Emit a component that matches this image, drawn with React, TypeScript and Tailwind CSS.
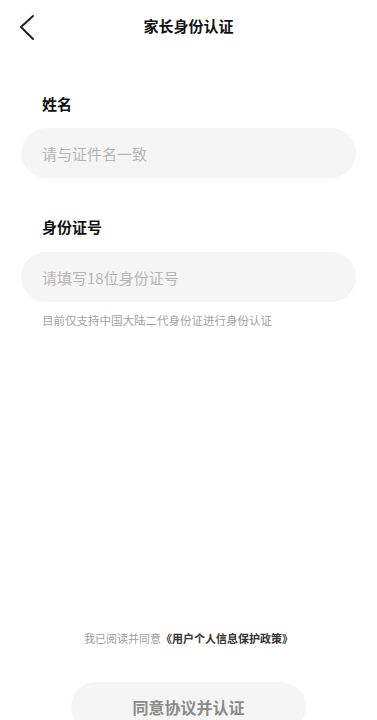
export default function App() {
  const font = { fontFamily: '"Noto Sans CJK SC", "Noto Sans", sans-serif' };

  return (
    <div className="min-h-screen w-full bg-white font-['Noto_Sans_CJK_SC',sans-serif]" style={font}>
      {/* header */}
      <div className="relative flex h-[52px] items-center justify-center">
        <button type="button" className="absolute left-[14px] top-[9px] p-1" aria-label="返回">
          <svg width="20" height="28" viewBox="0 0 20 28" fill="none">
            <path d="M15 3 L3 14 L15 26" stroke="#222" strokeWidth="2" strokeLinecap="round" strokeLinejoin="round" />
          </svg>
        </button>
        <h1 className="text-[15px] font-bold leading-[22px] text-[#111]">家长身份认证</h1>
      </div>

      {/* form */}
      <div className="px-[21px]">
        <label className="mt-[41px] block pl-[21px] text-[15px] font-bold leading-[22px] text-[#111]">姓名</label>
        <input
          type="text"
          placeholder="请与证件名一致"
          className="mt-[13px] h-[50px] w-full rounded-full bg-[#f5f5f5] px-[21px] text-[15px] text-[#222] outline-none placeholder:text-[#b5b5b5]"
        />

        <label className="mt-[38px] block pl-[21px] text-[15px] font-bold leading-[22px] text-[#111]">身份证号</label>
        <input
          type="text"
          placeholder="请填写18位身份证号"
          className="mt-[14px] h-[50px] w-full rounded-full bg-[#f5f5f5] px-[21px] text-[15px] text-[#222] outline-none placeholder:text-[#b5b5b5]"
        />
        <p className="mt-[10px] pl-[21px] text-[11.5px] leading-[16px] text-[#a3a3a3]">
          目前仅支持中国大陆二代身份证进行身份认证
        </p>
      </div>

      {/* agreement */}
      <p className="mt-[302px] text-center text-[11px] leading-[16px] text-[#a0a0a0]">
        我已阅读并同意<span className="font-bold text-[#333]">《用户个人信息保护政策》</span>
      </p>
      <button
        type="button"
        className="mx-auto mt-[36px] flex h-[50px] w-[235px] items-center justify-center rounded-full bg-[#f5f5f5] text-[16px] font-bold text-[#8a8a8a]"
      >
        同意协议并认证
      </button>
    </div>
  );
}
